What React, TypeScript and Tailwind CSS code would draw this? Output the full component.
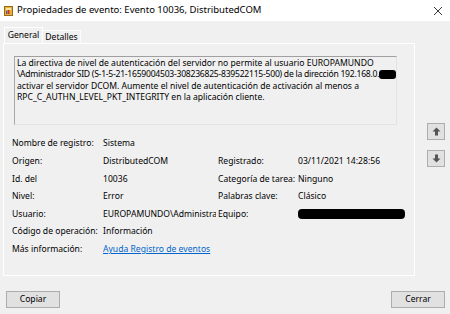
import React from "react";

const font = { fontFamily: '"Noto Sans", "Segoe UI", sans-serif' };

function Row({ l, v, rl, rv, link }: { l: string; v: React.ReactNode; rl?: string; rv?: React.ReactNode; link?: boolean }) {
  return (
    <div className="flex h-[17.6px] items-center">
      <div className="w-[91px] shrink-0 whitespace-nowrap">{l}</div>
      <div className="w-[115px] shrink-0 pr-[2px]">
        <div className={"overflow-hidden whitespace-nowrap " + (link ? "text-[#0066cc] underline" : "")}>{v}</div>
      </div>
      {rl !== undefined && <div className="w-[80px] shrink-0 whitespace-nowrap">{rl}</div>}
      {rv !== undefined && <div className="whitespace-nowrap">{rv}</div>}
    </div>
  );
}

function ArrowBtn({ down }: { down?: boolean }) {
  return (
    <div className="flex h-[17px] w-[18px] items-center justify-center border border-[#adadad] bg-[#e1e1e1]">
      <svg width="9" height="9" viewBox="0 0 9 9" className={down ? "rotate-180" : ""}>
        <path d="M4.5 0.5 L8.5 4.5 L6 4.5 L6 8.5 L3 8.5 L3 4.5 L0.5 4.5 Z" fill="#555" />
      </svg>
    </div>
  );
}

export default function App() {
  return (
    <div className="flex h-[314px] w-[450px] flex-col overflow-hidden bg-[#f0f0f0] text-[8.6px] text-black" style={font}>
      {/* Title bar */}
      <div className="flex h-[21px] shrink-0 items-center bg-white pl-[4px] pr-[4px]">
        <svg width="9" height="10" viewBox="0 0 9 10" className="mr-[4px]">
          <rect x="0" y="0" width="9" height="10" fill="#e8b23a" />
          <rect x="0.5" y="0.5" width="8" height="9" fill="none" stroke="#9a6a1a" strokeWidth="1" />
          <rect x="2" y="2" width="5" height="2" fill="#f6e6a8" />
          <rect x="3.5" y="4" width="2" height="4" fill="#d03030" />
          <rect x="2" y="5" width="1" height="3" fill="#3060c0" />
        </svg>
        <span className="flex-1 whitespace-nowrap text-[9.5px]">Propiedades de evento: Evento 10036, DistributedCOM</span>
        <svg width="10" height="10" viewBox="0 0 10 10" className="mr-[3px]">
          <path d="M1 1 L9 9 M9 1 L1 9" stroke="#222" strokeWidth="0.9" />
        </svg>
      </div>

      {/* Body */}
      <div className="flex flex-1 pt-[6px]">
        <div className="ml-[3px] flex w-[412px] flex-col">
          {/* Tabs */}
          <div className="flex h-[16px] items-end">
            <div className="ml-[1px] flex h-[16px] w-[39px] items-center justify-center border-x border-t border-white bg-[#f0f0f0]">General</div>
            <div className="flex h-[13px] w-[38px] items-center justify-center border-r border-t border-[#fbfbfb]">Detalles</div>
          </div>
          {/* Panel */}
          <div className="flex h-[233px] flex-col border border-white px-[8px] pt-[12px]">
            <div className="relative ml-[2px] h-[69px] w-[383px] overflow-hidden whitespace-nowrap border border-t-[#a0a0a0] border-l-[#a8a8a8] border-r-[#e3e3e3] border-b-[#e3e3e3] px-[2px] pt-[1px] leading-[11.3px]">
              La directiva de nivel de autenticación del servidor no permite al usuario EUROPAMUNDO
              <br />
              <span className="tracking-[-0.25px]">\Administrador SID (S-1-5-21-1659004503-308236825-839522115-500) de la dirección 192.168.0.-</span>
              <br />
              activar el servidor DCOM. Aumente el nivel de autenticación de activación al menos a
              <br />
              RPC_C_AUTHN_LEVEL_PKT_INTEGRITY en la aplicación cliente.
              <div className="absolute left-[364px] top-[13px] h-[9px] w-[17px] rounded-[3px] bg-black" />
            </div>
            <div className="mt-[10px] flex flex-col">
              <Row l="Nombre de registro:" v="Sistema" />
              <Row l="Origen:" v="DistributedCOM" rl="Registrado:" rv="03/11/2021 14:28:56" />
              <Row l="Id. del" v="10036" rl="Categoría de tarea:" rv="Ninguno" />
              <Row l="Nivel:" v="Error" rl="Palabras clave:" rv="Clásico" />
              <Row
                l="Usuario:"
                v="EUROPAMUNDO\Administrador"
                rl="Equipo:"
                rv={<div className="h-[10px] w-[107px] rounded-[4px] bg-black" />}
              />
              <Row l="Código de operación:" v="Información" />
              <Row l="Más información:" v="Ayuda Registro de eventos" link />
            </div>
          </div>
        </div>
        {/* Right nav buttons */}
        <div className="ml-[12px] flex flex-col gap-[10px] pt-[96px]">
          <ArrowBtn />
          <ArrowBtn down />
        </div>
      </div>

      {/* Bottom buttons */}
      <div className="flex h-[39px] shrink-0 items-start justify-between px-[6px] pt-[15px]">
        <div className="flex h-[17px] w-[54px] items-center justify-center border border-[#adadad] bg-[#e1e1e1]">Copiar</div>
        <div className="mr-[-1px] flex h-[17px] w-[54px] items-center justify-center border border-[#adadad] bg-[#e1e1e1]">Cerrar</div>
      </div>
    </div>
  );
}
